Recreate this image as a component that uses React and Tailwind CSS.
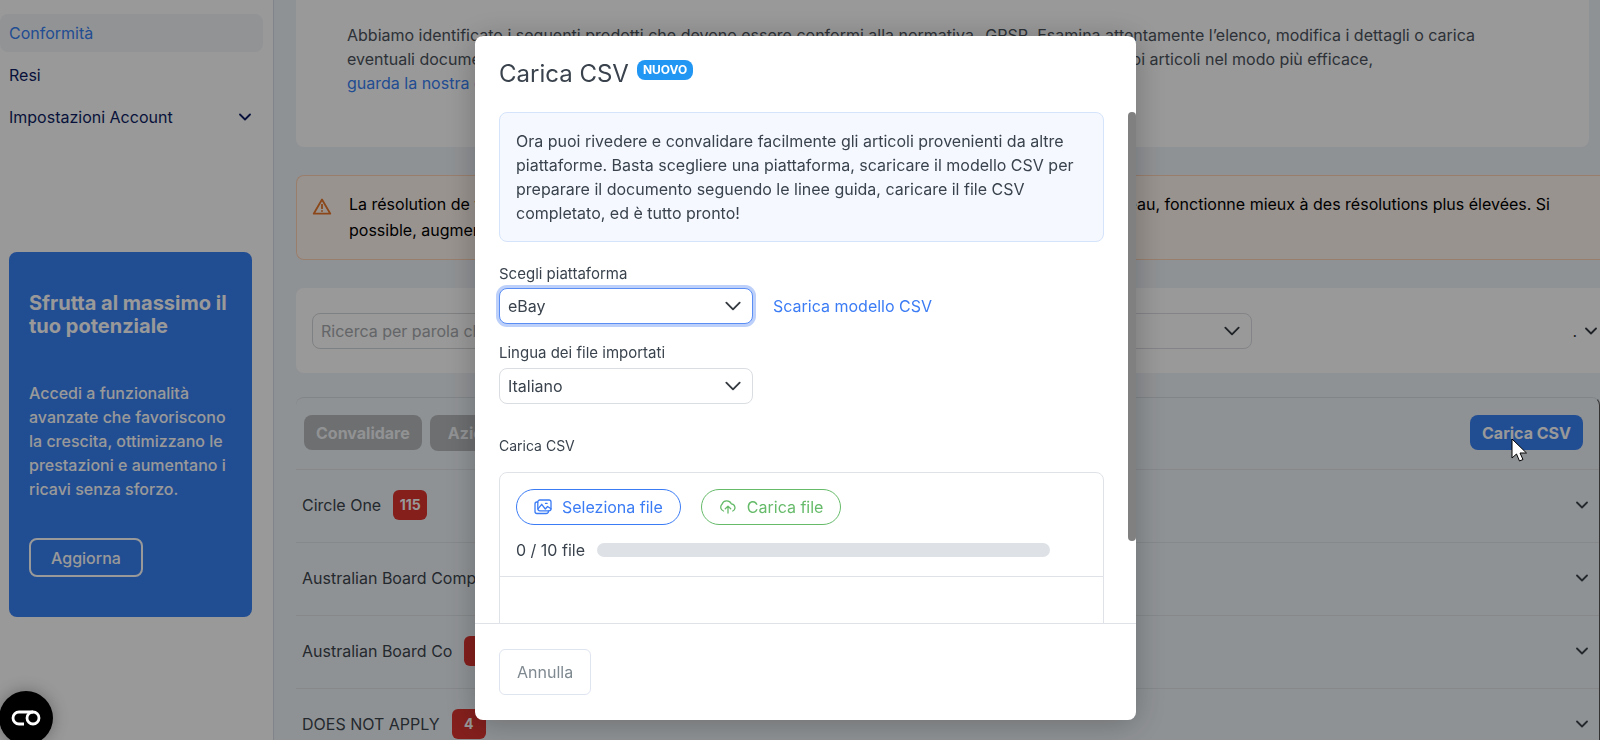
import React from "react";

function Chevron({ className = "", size = 12, stroke = 1.8 }) {
  return (
    <svg className={className} width={size} height={size} viewBox="0 0 12 12" fill="none" stroke="currentColor" strokeWidth={stroke} aria-hidden="true">
      <path d="M1 3.5 6 8.5 11 3.5" strokeLinecap="round" strokeLinejoin="round" />
    </svg>
  );
}

function Select({ id, options, focused, className = "" }) {
  return (
    <div className={`relative ${className}`}>
      <select
        id={id}
        className={`h-9 w-full appearance-none rounded-lg border bg-white pr-10 pl-2 text-base text-[#3a434d] outline-none ${
          focused ? "border-[#5a8ef5] ring-3 ring-[#bdd0fa]" : "border-[#dadde2]"
        }`}
      >
        {options.map((o) => (
          <option key={o}>{o}</option>
        ))}
      </select>
      <Chevron size={16} stroke={1.4} className="pointer-events-none absolute top-1/2 right-3 -translate-y-1/2 text-[#343a40]" />
    </div>
  );
}

function ImagesIcon() {
  return (
    <svg width="18" height="16" viewBox="0 0 18 16" fill="none" stroke="currentColor" strokeWidth="1.3" strokeLinejoin="round" strokeLinecap="round" aria-hidden="true">
      <rect x="3.800" y="1" width="13.200" height="10.800" rx="2" />
      <path d="M3.800 3H3A2 2 0 0 0 1 5V12.500A2 2 0 0 0 3 14.500H12A2.500 2.500 0 0 0 14.500 12" />
      <path d="M4 9.800 7.700 5.300 11.300 10 13.600 7.500 17 9.800" />
      <path d="M11.500 4.400h1.600" />
    </svg>
  );
}

function CloudIcon() {
  return (
    <svg width="18" height="16" viewBox="0 0 18 16" fill="none" stroke="currentColor" strokeWidth="1.3" strokeLinejoin="round" strokeLinecap="round" aria-hidden="true">
      <path d="M4.500 12A4 4 0 0 1 3 5.300 5 5 0 0 1 12.300 4.800 3.800 3.800 0 0 1 13.800 12" />
      <path d="M9 14V7.300M6.300 9.800 9 7.100 11.700 9.800" />
    </svg>
  );
}

function Sidebar() {
  return (
    <aside className="flex w-[274px] shrink-0 flex-col border-r border-[#d8dde6] bg-white pt-[14px]">
      <nav className="flex flex-col gap-1 pr-2.5 text-base text-[#0e1d63]">
        <a href="#conformita" className="flex h-[38px] items-center rounded-lg bg-[#f2f5f9] pl-[9px] text-[#3880f4]">Conformità</a>
        <a href="#resi" className="flex h-[38px] items-center pl-[9px]">Resi</a>
        <a href="#account" className="flex h-[38px] items-center justify-between pr-3 pl-[9px]">
          Impostazioni Account
          <Chevron />
        </a>
      </nav>
      <section className="mt-[116px] mr-[21px] ml-[9px] rounded-lg bg-[#3880f4] px-5 py-10 text-white">
        <h2 className="text-xl leading-[23px] font-bold">Sfrutta al massimo il tuo potenziale</h2>
        <p className="mt-[43px] text-base leading-6 font-medium">
          Accedi a funzionalità avanzate che favoriscono la crescita, ottimizzano le prestazioni e aumentano i ricavi senza sforzo.
        </p>
        <button className="mt-[37px] h-[39px] rounded-lg border-2 border-white px-5 text-base font-medium">Aggiorna</button>
      </section>
    </aside>
  );
}

const brands = [
  ["Circle One", "115"],
  ["Australian Board Company", "12"],
  ["Australian Board Co", "7"],
  ["DOES NOT APPLY", "4"],
];

function Main() {
  return (
    <main className="min-w-0 flex-1 overflow-hidden bg-[#eff3f7] pl-[22px]">
      <section className="mr-[11px] h-[147px] rounded-b-lg bg-white pt-[23px] pr-[114px] pl-[51px] text-base leading-6 text-[#4b535c]">
        <span className="flex justify-between whitespace-nowrap">
          <span>Abbiamo identificato i seguenti prodotti che devono essere conformi alla normativa</span>
          <span>GPSR. Esamina attentamente l’elenco, modifica i dettagli o carica</span>
        </span>
        <span className="flex justify-between pr-[102px]">
          <span>eventuali documenti mancanti. Per gestire</span>
          <span>i tuoi articoli nel modo più efficace,</span>
        </span>
        <a href="#guida" className="text-[#3880f4]">guarda la nostra guida</a>
      </section>

      <section className="mt-7 flex h-[85px] gap-4 rounded-l-lg border border-r-0 border-[#ffd3b5] bg-[#fff5ef] pt-[15px] pl-[15px] text-base leading-[26px] text-black">
        <svg className="mt-[7px] shrink-0" width="20" height="17" viewBox="0 0 20 17" fill="none" stroke="#e8772b" strokeWidth="1.800" aria-hidden="true">
          <path d="M10 1.500 18.300 15.700H1.700Z" strokeLinejoin="round" />
          <path d="M10 6v5M10 12.200v1.600" />
        </svg>
        <div className="min-w-0 flex-1 pr-[50px] pl-px">
          <div className="flex justify-between whitespace-nowrap">
            <span>La résolution de votre écran est basse.</span>
            <span>Notre tableau, fonctionne mieux à des résolutions plus élevées. Si</span>
          </div>
          possible, augmentez la résolution.
        </div>
      </section>

      <section className="mt-7 flex h-[85px] items-center justify-between rounded-l-lg bg-white pl-4">
        <div className="flex w-[940px] gap-4">
          <input aria-label="Ricerca" placeholder="Ricerca per parola chiave" className="h-9 min-w-0 flex-1 rounded-lg border border-[#d3d7da] px-2 text-base placeholder:text-[#a6a9ad]" />
          <Select className="flex-1" options={[""]} id="filtro" />
          <label htmlFor="filtro" className="sr-only">Filtro</label>
        </div>
        <button className="flex items-center gap-2 pr-[3px] text-base text-[#343a40]">
          .
          <Chevron />
        </button>
      </section>

      <section className="mt-6 rounded-t-lg border-t border-r border-t-[#d9dee3] border-r-[#555] bg-[#eff4f8]">
        <div className="flex h-[72px] items-center border-b border-[#dfe3e7] pr-4 pb-0.5 pl-2">
          <button className="h-[35px] rounded-lg bg-[#b7b9bb] px-3 text-base font-bold text-[#f2f4f6]">Convalidare</button>
          <button className="ml-2 h-9 rounded-lg bg-[#b7b9bb] px-[18px] text-base font-bold text-[#f2f4f6]">Azioni</button>
          <button className="ml-auto h-[35px] rounded-lg bg-[#3880f4] px-3 text-base font-bold text-white">Carica CSV</button>
        </div>
        {brands.map(([name, n]) => (
          <div key={name} className="flex h-[73px] items-center border-b border-[#dfe3e7] pr-[11px] pb-[3px] pl-1.5 text-base text-[#3c454e]">
            {name}
            <span className="ml-3 flex h-[30px] min-w-[34px] items-center justify-center rounded-md bg-[#dc3530] px-1.5 text-sm font-bold text-white">{n}</span>
            <button aria-label={`Espandi ${name}`} className="ml-auto">
              <Chevron />
            </button>
          </div>
        ))}
      </section>
    </main>
  );
}

function Modal() {
  return (
    <div className="fixed inset-0 flex justify-center bg-black/40 pt-9 pb-5 pl-[11px]">
      <div role="dialog" aria-label="Carica CSV" className="relative flex w-[661px] flex-col rounded-lg bg-white text-[#3a434d] shadow-[0_4px_32px_rgba(0,0,0,0.25)]">
        <header className="flex h-[76px] shrink-0 items-start gap-2 px-6 pt-5">
          <h1 className="text-2xl leading-9">Carica CSV</h1>
          <span className="mt-1 rounded-lg bg-[#2196f3] px-1.5 text-xs leading-5 font-bold text-white">NUOVO</span>
        </header>
        <div className="min-h-0 flex-1 overflow-hidden pr-8 pl-6">
          <p className="rounded-lg border border-[#d5e4fb] bg-[#f5f8ff] p-4 text-base leading-6">
            Ora puoi rivedere e convalidare facilmente gli articoli provenienti da altre piattaforme. Basta scegliere una piattaforma, scaricare il modello CSV per preparare il documento seguendo le linee guida, caricare il file CSV completato, ed è tutto pronto!
          </p>
          <label htmlFor="piattaforma" className="mt-[22px] block text-[15px] leading-5">Scegli piattaforma</label>
          <div className="mt-1 flex items-center gap-5">
            <Select id="piattaforma" className="w-[254px]" options={["eBay"]} focused />
            <a href="#modello" className="text-base text-[#3b7cf5]">Scarica modello CSV</a>
          </div>
          <label htmlFor="lingua" className="mt-[19px] block text-[15px] leading-5">Lingua dei file importati</label>
          <Select id="lingua" className="mt-[5px] w-[254px]" options={["Italiano"]} />
          <h2 className="mt-8 text-sm leading-5">Carica CSV</h2>
          <div className="mt-4 h-64 rounded-lg border border-[#dfe3e8]">
            <div className="flex flex-col gap-[13px] border-b border-[#dfe3e8] px-4 pt-4 pb-[14px]">
              <div className="flex gap-5">
                <button className="flex h-9 items-center gap-2.5 rounded-full border border-[#3b7cf5] px-[17px] text-base text-[#3b7cf5]">
                  <ImagesIcon />
                  Seleziona file
                </button>
                <button className="flex h-9 items-center gap-2.5 rounded-full border border-[#66bb6a] px-[17px] text-base text-[#66bb6a]">
                  <CloudIcon />
                  Carica file
                </button>
              </div>
              <div className="flex items-center gap-3 pr-[37px] text-base">
                0 / 10 file
                <div role="progressbar" aria-label="File caricati" aria-valuenow={0} className="h-[14px] flex-1 rounded-full bg-[#dee2e6]" />
              </div>
            </div>
          </div>
        </div>
        <footer className="flex h-[97px] shrink-0 items-start border-t border-[#dfe3e8] px-6 pt-[25px]">
          <button className="h-[46px] rounded-md border border-[#dfe5f0] px-[17px] text-base text-[#7f8990]">Annulla</button>
        </footer>
        <div className="absolute top-[76px] right-0 h-[429px] w-2 rounded-full bg-[#808080]" />
      </div>
    </div>
  );
}

export default function App() {
  return (
    <div className="flex h-screen overflow-hidden font-[Inter,sans-serif]">
      <Sidebar />
      <Main />
      <Modal />
      <button aria-label="Preferenze cookie" className="fixed -bottom-[5px] -left-px flex size-[54px] items-center justify-center rounded-full bg-black shadow-[0_0_16px_rgba(0,0,0,0.3)]">
        <svg width="30" height="16" viewBox="0 0 30 16" fill="none" stroke="white" strokeWidth="2.800" aria-hidden="true">
          <circle cx="22" cy="8" r="6" />
          <path d="M22 2H8A6 6 0 0 0 8 14H13" />
        </svg>
      </button>
      <svg className="pointer-events-none fixed top-[438px] left-[1511px]" width="18" height="25" viewBox="0 0 18 25" aria-hidden="true">
        <path d="M1 1V20L5.500 16 8.500 23 12 21.500 9 15H15.500Z" fill="white" stroke="black" strokeWidth="1" />
      </svg>
    </div>
  );
}
